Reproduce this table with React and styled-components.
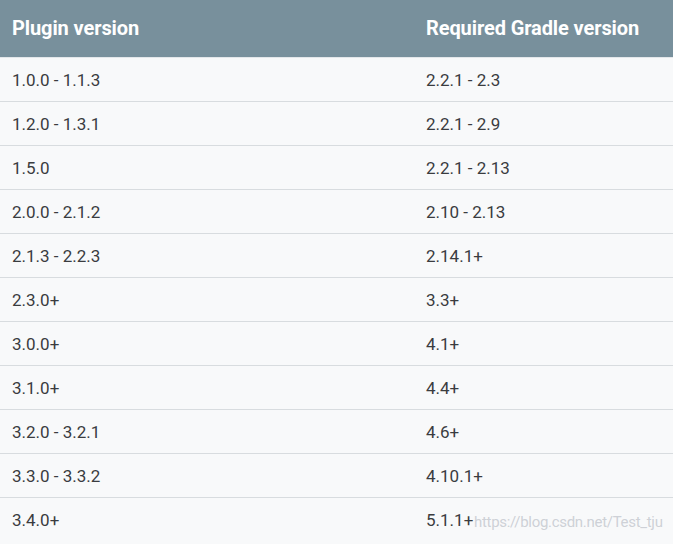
import styled, { createGlobalStyle } from "styled-components";

const rows = [
  ["1.0.0 - 1.1.3", "2.2.1 - 2.3"],
  ["1.2.0 - 1.3.1", "2.2.1 - 2.9"],
  ["1.5.0", "2.2.1 - 2.13"],
  ["2.0.0 - 2.1.2", "2.10 - 2.13"],
  ["2.1.3 - 2.2.3", "2.14.1+"],
  ["2.3.0+", "3.3+"],
  ["3.0.0+", "4.1+"],
  ["3.1.0+", "4.4+"],
  ["3.2.0 - 3.2.1", "4.6+"],
  ["3.3.0 - 3.3.2", "4.10.1+"],
  ["3.4.0+", "5.1.1+"],
];

const App = () => {
  return (
    <>
      <GlobalStyle />
      <Page>
        <Table>
          <Head>
            <HeadCell>Plugin version</HeadCell>
            <HeadCell>Required Gradle version</HeadCell>
          </Head>
          {rows.map(([plugin, gradle], i) => (
            <Row key={plugin} first={i === 0}>
              <Cell>{plugin}</Cell>
              <Cell>{gradle}</Cell>
            </Row>
          ))}
        </Table>
        <Watermark>https://blog.csdn.net/Test_tju</Watermark>
      </Page>
    </>
  );
};

const GlobalStyle = createGlobalStyle`
  body {
    margin: 0;
    background: #f8f9fa;
    font-family: Roboto, "Liberation Sans", sans-serif;
  }
`;

const Page = styled.div`
  position: relative;
  width: 673px;
  height: 544px;
  overflow: hidden;
  background: #f8f9fa;
`;

const Table = styled.div`
  display: flex;
  flex-direction: column;
`;

const Head = styled.div`
  display: grid;
  grid-template-columns: 414px 1fr;
  height: 57px;
  padding-bottom: 2px;
  box-sizing: border-box;
  align-items: center;
  background: #78909c;
`;

const HeadCell = styled.div`
  padding-left: 12px;
  color: #ffffff;
  font-size: 20px;
  font-weight: 700;
  letter-spacing: -0.1px;
`;

const Row = styled.div`
  display: grid;
  grid-template-columns: 414px 1fr;
  height: 44px;
  box-sizing: border-box;
  align-items: center;
  border-top: 1px solid ${(p) => (p.first ? "#e3e7ea" : "#d8dcdf")};
`;

const Cell = styled.div`
  padding-left: 12px;
  color: #3a3c3f;
  font-size: 17px;
`;

const Watermark = styled.div`
  position: absolute;
  left: 474px;
  top: 513px;
  color: rgba(200, 204, 210, 0.9);
  font-size: 15px;
  letter-spacing: -0.3px;
`;

export default App;
